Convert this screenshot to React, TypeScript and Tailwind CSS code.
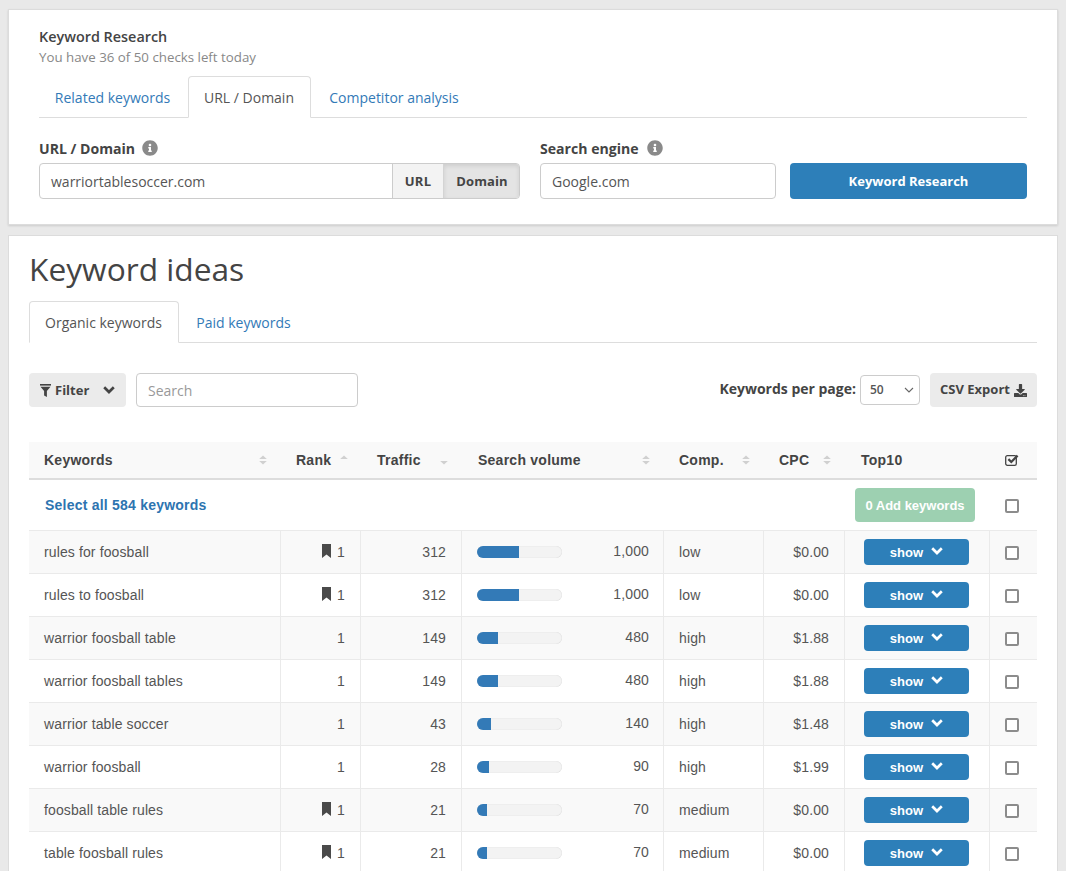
import React from "react";
import { FaInfoCircle, FaDownload } from "react-icons/fa";

const rows = [
  { k: "rules for foosball", b: true, r: 1, t: 312, v: "1,000", w: 42, c: "low", p: "$0.00" },
  { k: "rules to foosball", b: true, r: 1, t: 312, v: "1,000", w: 42, c: "low", p: "$0.00" },
  { k: "warrior foosball table", b: false, r: 1, t: 149, v: "480", w: 21, c: "high", p: "$1.88" },
  { k: "warrior foosball tables", b: false, r: 1, t: 149, v: "480", w: 21, c: "high", p: "$1.88" },
  { k: "warrior table soccer", b: false, r: 1, t: 43, v: "140", w: 14, c: "high", p: "$1.48" },
  { k: "warrior foosball", b: false, r: 1, t: 28, v: "90", w: 12, c: "high", p: "$1.99" },
  { k: "foosball table rules", b: true, r: 1, t: 21, v: "70", w: 10, c: "medium", p: "$0.00" },
  { k: "table foosball rules", b: true, r: 1, t: 21, v: "70", w: 10, c: "medium", p: "$0.00" },
];

function Sort({ mode = "both" }: { mode?: "both" | "up" | "down" }) {
  return (
    <svg width="8" height="10" viewBox="0 0 8 10" className="shrink-0">
      {mode !== "down" && <path d="M4 0.5 L7.8 4 H0.2 Z" fill="#d0d0d0" />}
      {mode !== "up" && <path d="M4 9.5 L7.8 6 H0.2 Z" fill="#d0d0d0" />}
    </svg>
  );
}

function Box() {
  return <span className="block w-[14px] h-[14px] border-2 border-[#8c8c8c] rounded-[2px] bg-white" />;
}

function Bookmark() {
  return (
    <svg width="9" height="14" viewBox="0 0 9 14" className="-mt-[2px]" fill="#4a4a4a">
      <path d="M0 0 H9 V14 L4.5 10.5 L0 14 Z" />
    </svg>
  );
}

function CheckSquare() {
  return (
    <svg width="14" height="12" viewBox="0 0 14 12" fill="none" className="block">
      <rect x="0.7" y="1.7" width="10.6" height="9.6" rx="1.6" stroke="#444" strokeWidth="1.3" />
      <path d="M3.4 5.2 L6.3 8 L12.6 1.6" stroke="#444" strokeWidth="2.3" />
    </svg>
  );
}

function Chevron({ className }: { className?: string }) {
  return (
    <svg width="12" height="8" viewBox="0 0 12 8" fill="none" stroke="currentColor" strokeWidth="2.7" className={className}>
      <path d="M1.2 1.3 L6 6 L10.8 1.3" />
    </svg>
  );
}

function Tab({ label, active, w }: { label: string; active?: boolean; w: string }) {
  return active ? (
    <div className={`${w} h-[42px] -mb-px pr-px flex items-center justify-center bg-white border border-[#ddd] border-b-white rounded-t-[4px] text-[#555]`}>
      {label}
    </div>
  ) : (
    <div className={`${w} h-[42px] -mb-px pr-px flex items-center justify-center text-[#337ab7]`}>{label}</div>
  );
}

const th = "h-[38px] p-0 text-left font-bold text-[14px] text-[#444] border-b-2 border-[#ddd] tracking-[0.25px]";
const td = "h-[43px] p-0 border-b border-[#eaeaea] text-[14px] tracking-[0.12px] text-[#555]";
const bl = "border-l border-[#eaeaea]";

export default function App() {
  return (
    <div className="w-[1066px] h-[871px] overflow-hidden bg-[#e9e9e9] pt-[9px] pl-[8px] font-['Open_Sans',sans-serif] text-[#444]">
      <section className="w-[1050px] h-[216px] bg-white border border-[#dcdcdc] shadow-[0_1px_2px_rgba(0,0,0,0.12)] pt-[17px] pl-[30px] pr-[30px]">
        <h2 className="text-[14.4px] leading-[20px] font-semibold text-[#444]">Keyword Research</h2>
        <p className="text-[13.3px] leading-[20px] text-[#888]">You have 36 of 50 checks left today</p>
        <div className="mt-[9px] flex h-[42px] items-end border-b border-[#ddd] text-[14px]">
          <Tab label="Related keywords" w="w-[148px]" />
          <Tab label="URL / Domain" active w="w-[123px] ml-px" />
          <Tab label="Competitor analysis" w="w-[167px]" />
        </div>
        <div className="mt-[21px] flex">
          <div className="w-[481px]">
            <label className="flex items-center h-[20px] text-[14.1px] font-bold text-[#444]">
              URL / Domain
              <FaInfoCircle className="ml-[7px] -mt-[2px] text-[16px] text-[#8a8a8a]" />
            </label>
            <div className="mt-[4px] flex h-[36px] border border-[#ccc] rounded-[4px] overflow-hidden text-[13px] font-bold text-[#444]">
              <div className="flex-1 pl-[11px] flex items-center text-[14px] font-normal text-[#555]">warriortablesoccer.com</div>
              <div className="w-[51px] flex items-center justify-center bg-[#f3f3f3] border-l border-[#ccc] tracking-[0.3px] pt-px">URL</div>
              <div className="w-[76px] flex items-center justify-center bg-[#e4e4e4] border-l border-[#d4d4d4] shadow-[inset_0_2px_4px_rgba(0,0,0,0.1)] tracking-[0.1px] pt-px pl-px">Domain</div>
            </div>
          </div>
          <div className="ml-[20px] w-[236px]">
            <label className="flex items-center h-[20px] text-[14.1px] font-bold text-[#444]">
              Search engine
              <FaInfoCircle className="ml-[8px] -mt-[2px] text-[16px] text-[#8a8a8a]" />
            </label>
            <div className="mt-[4px] h-[36px] pl-[11px] flex items-center border border-[#ccc] rounded-[4px] text-[14px] text-[#555]">Google.com</div>
          </div>
          <button className="ml-[14px] mt-[24px] w-[237px] h-[36px] pt-px rounded-[4px] bg-[#2d7fb9] text-white text-[13px] font-bold">Keyword Research</button>
        </div>
      </section>

      <section className="mt-[10px] w-[1050px] h-[700px] bg-white border border-[#dcdcdc] pt-[11px] pl-[20px] pr-[20px]">
        <h1 className="text-[31.7px] leading-[44px] text-[#444]">Keyword ideas</h1>
        <div className="mt-[10px] flex h-[42px] items-end border-b border-[#ddd] text-[14px]">
          <Tab label="Organic keywords" active w="w-[150px]" />
          <Tab label="Paid keywords" w="w-[130px]" />
        </div>
        <div className="mt-[30px] flex items-center h-[34px]">
          <button className="w-[97px] h-[34px] rounded-[4px] bg-[#ebebeb] flex items-center pl-[11px] pt-px text-[13px] font-bold text-[#444]">
            <svg width="11" height="13" viewBox="0 0 11 13" className="mr-[4px] -mt-px" fill="#444">
              <rect x="0" y="0" width="11" height="1.6" />
              <path d="M0.5 2.8 H10.5 L6.9 7 V13 L4.1 11.4 V7 Z" />
            </svg>
            Filter
            <Chevron className="ml-[14px] -mt-px" />
          </button>
          <div className="ml-[10px] w-[222px] h-[34px] border border-[#ccc] rounded-[4px] pl-[11px] flex items-center text-[14px] text-[#999]">Search</div>
          <div className="ml-auto text-[14px] font-bold text-[#444] -mt-[3px]">Keywords per page:</div>
          <div className="ml-[4px] w-[60px] h-[30px] border border-[#ccc] rounded-[4px] flex items-center justify-between pl-[9px] pr-[5px] text-[12px] font-semibold text-[#555]">
            50
            <svg width="10" height="6" viewBox="0 0 10 6" fill="none" stroke="#666" strokeWidth="1.1"><path d="M1 1 L5 5 L9 1" /></svg>
          </div>
          <button className="ml-[10px] w-[107px] h-[34px] rounded-[4px] bg-[#ebebeb] flex items-center justify-center gap-[4px] text-[13px] font-bold text-[#444]">
            CSV Export
            <FaDownload className="text-[13px]" />
          </button>
        </div>

        <table className="mt-[35px] w-[1008px] table-fixed border-separate border-spacing-0 font-['Liberation_Sans',sans-serif]">
          <colgroup>
            <col className="w-[251px]" />
            <col className="w-[80px]" />
            <col className="w-[101px]" />
            <col className="w-[202px]" />
            <col className="w-[100px]" />
            <col className="w-[81px]" />
            <col className="w-[145px]" />
            <col className="w-[48px]" />
          </colgroup>
          <thead className="bg-[#f9f9f9]">
            <tr>
              <th className={th}><div className="flex items-center justify-between pl-[15px] pr-[13px]">Keywords<Sort /></div></th>
              <th className={th}><div className="flex items-center pl-[16px] gap-[9px]">Rank<Sort mode="up" /></div></th>
              <th className={th}><div className="flex items-center pl-[17px] gap-[19px]">Traffic<Sort mode="down" /></div></th>
              <th className={th}><div className="flex items-center justify-between pl-[17px] pr-[13px]">Search volume<Sort /></div></th>
              <th className={th}><div className="flex items-center pl-[16px] gap-[18px]">Comp.<Sort /></div></th>
              <th className={th}><div className="flex items-center pl-[16px] gap-[14px]">CPC<Sort /></div></th>
              <th className={th}><div className="pl-[17px]">Top10</div></th>
              <th className={th}><div className="pl-[16px]"><CheckSquare /></div></th>
            </tr>
          </thead>
          <tbody>
            <tr>
              <td colSpan={6} className="h-[51px] p-0 border-b border-[#eaeaea]">
                <span className="pl-[16px] text-[14px] font-bold tracking-[0.22px] text-[#2d74b0]">Select all 584 keywords</span>
              </td>
              <td className="h-[51px] p-0 border-b border-[#eaeaea]">
                <button className="ml-[11px] w-[120px] h-[34px] pt-px rounded-[4px] bg-[#9dd0b1] text-white text-[13px] font-bold">0 Add keywords</button>
              </td>
              <td className="h-[51px] p-0 border-b border-[#eaeaea]"><div className="pl-[16px] pt-[2px]"><Box /></div></td>
            </tr>
            {rows.map((r, i) => (
              <tr key={i} className={i % 2 === 0 ? "bg-[#f9f9f9]" : "bg-white"}>
                <td className={`${td} pl-[15px]`}>{r.k}</td>
                <td className={`${td} ${bl} pr-[15px]`}>
                  <div className="flex items-center justify-end gap-[6px]">
                    {r.b && <Bookmark />}
                    <span>{r.r}</span>
                  </div>
                </td>
                <td className={`${td} ${bl} pr-[15px] text-right`}>{r.t}</td>
                <td className={`${td} ${bl} pl-[15px] pr-[14px]`}>
                  <div className="flex items-center justify-between">
                    <div className="w-[85px] h-[12px] rounded-full bg-[#f3f3f3] shadow-[inset_0_0_1px_rgba(0,0,0,0.2)] overflow-hidden">
                      <div className="h-full bg-[#337ab7]" style={{ width: r.w }} />
                    </div>
                    <span className="-mt-[2px]">{r.v}</span>
                  </div>
                </td>
                <td className={`${td} ${bl} pl-[15px]`}>{r.c}</td>
                <td className={`${td} ${bl} pr-[15px] text-right`}>{r.p}</td>
                <td className={`${td} ${bl}`}>
                  <button className="ml-[19px] w-[105px] h-[26px] pt-px rounded-[4px] bg-[#2d7fb9] text-white text-[13px] font-bold flex items-center justify-center gap-[8px]">
                    show
                    <Chevron className="-mt-[3px]" />
                  </button>
                </td>
                <td className={`${td} ${bl}`}><div className="pl-[15px] pt-[2px]"><Box /></div></td>
              </tr>
            ))}
          </tbody>
        </table>
      </section>
    </div>
  );
}
